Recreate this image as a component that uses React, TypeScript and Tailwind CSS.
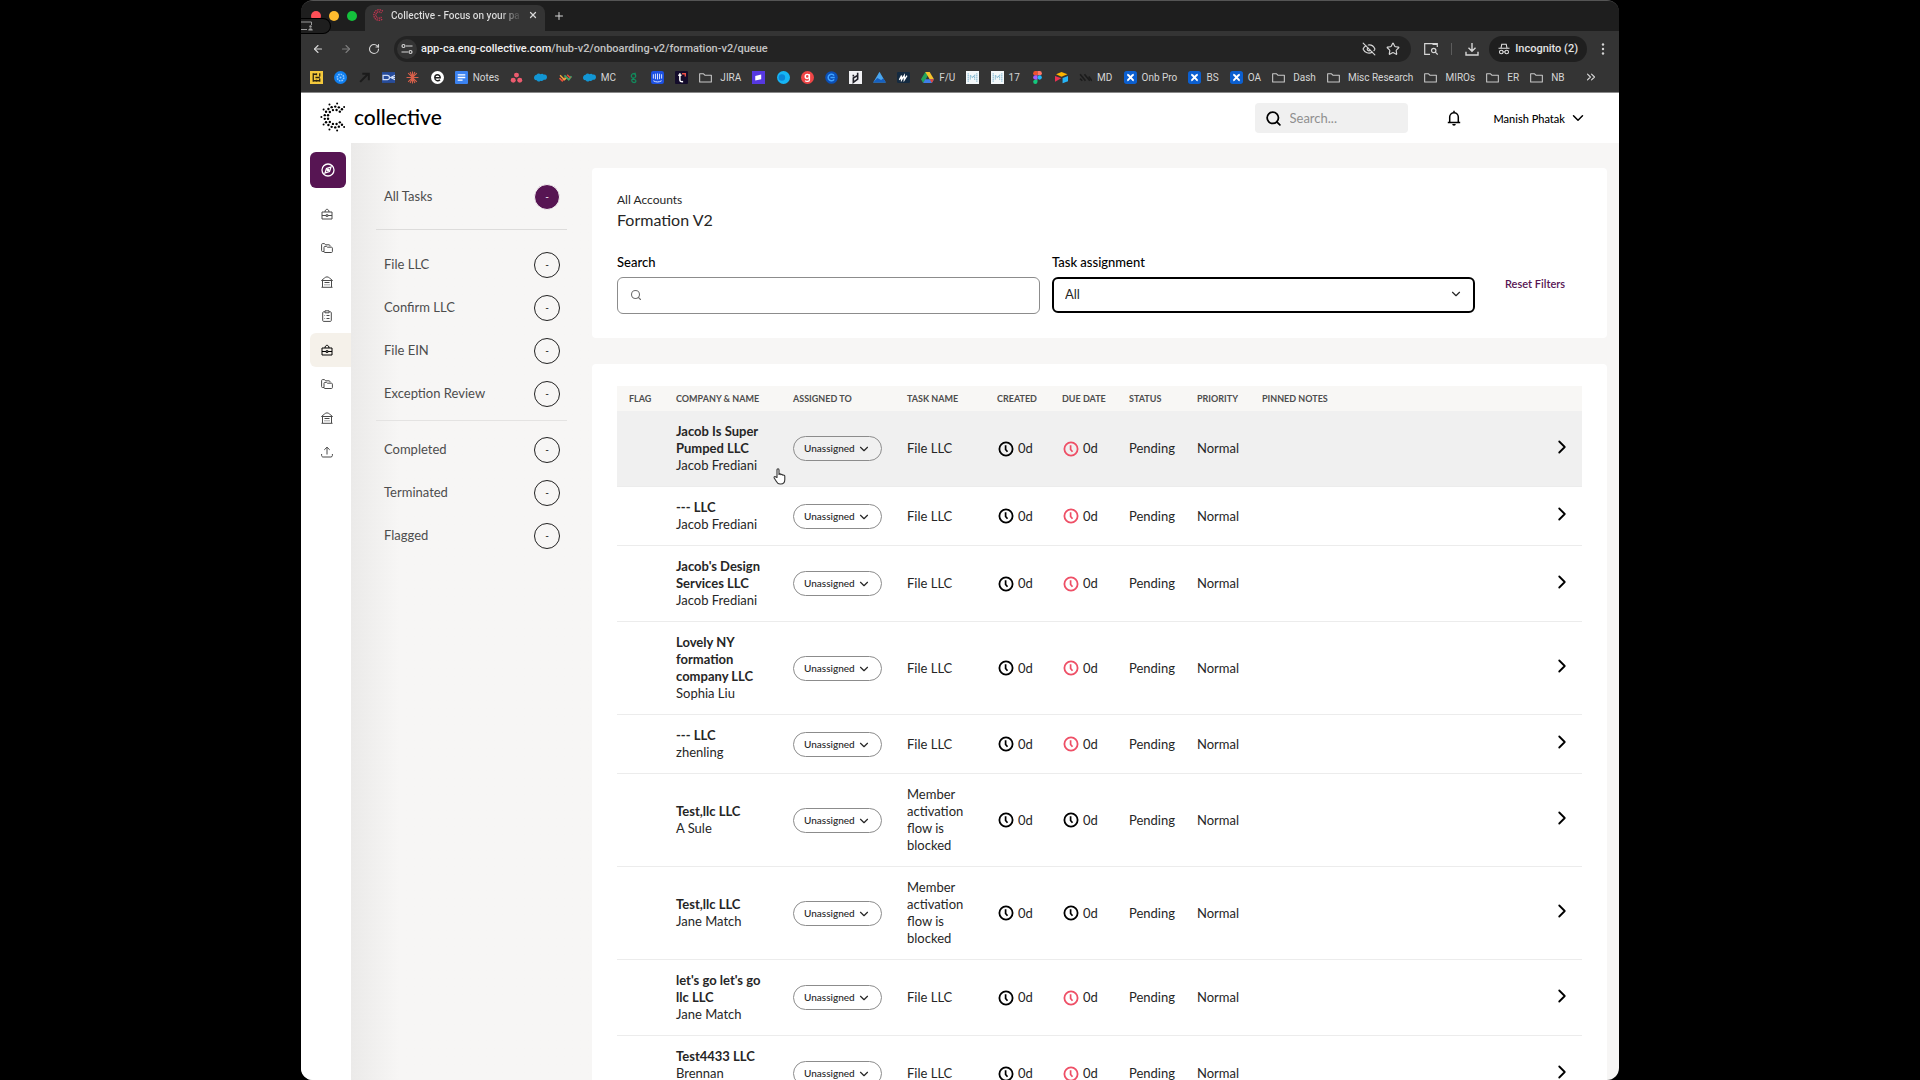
import { useState, type ReactNode } from "react";
import { ArrowLeft, ArrowRight, ChevronDown, ChevronRight, ChevronsRight, EyeOff, Plus, RotateCw, Search, Star, X } from "lucide-react";

interface Bookmark {
  icon: ReactNode;
  label?: string;
}

interface Task {
  company: string;
  member: string;
  extra?: string;
  task: string;
  overdue: boolean;
}

const Box = ({ children }: { children: ReactNode }) => (
  <svg viewBox="0 0 12 12" className="size-[13px] shrink-0" aria-hidden="true">
    {children}
  </svg>
);

const FolderIcon = () => (
  <span className="pr-[3px]">
    <Box>
      <path d="M.6 2.6h3.6l1.2 1.3h6v6.3H.6z" fill="none" stroke="#c7c7c7" strokeWidth="1" strokeLinejoin="round" />
    </Box>
  </span>
);

const SalesforceIcon = () => (
  <Box>
    <path d="M2.4 3.4C3.2 2 5 1.900 6 3c1-.9 2.400-.7 3.100.4C11 3 12 4.300 12 5.800c0 1.700-1.600 2.600-3 2.300C8.200 9.300 6.800 9.400 6 8.900 5 10.200 3.100 9.900 2.600 8.500 1 8.800 0 7.600 0 6.200c0-1.400 1-2.600 2.400-2.800z" fill="#1296d4" />
  </Box>
);

const XIcon = () => (
  <Box>
    <rect width="12" height="12" rx="2.500" fill="#0b5fd0" />
    <path d="M3 3.500c2 0 4.500 5 6 5M9 3.500c-2 0-4.500 5-6 5" stroke="#fff" strokeWidth="1.800" fill="none" />
  </Box>
);

const MatrixIcon = () => (
  <Box>
    <rect width="12" height="12" fill="#f4f8fa" />
    <path d="M2 2v8M10 2v8M4 4l2 2 2-2v4M4 4v4" stroke="#7fb6cf" strokeWidth="1" strokeDasharray="1.300 .5" fill="none" />
  </Box>
);

const bookmarks: Bookmark[] = [
  {
    icon: (
      <Box>
        <rect width="12" height="12" fill="#f4c93c" />
        <path d="M3 2v8M6 2v2M6 8v2M3 3h3M3 9h6M9 2v3M9 7v3M6 6h3M5 6h1" stroke="#2b2410" strokeWidth="1.200" />
      </Box>
    ),
  },
  {
    icon: (
      <Box>
        <circle cx="6" cy="6" r="6" fill="#0f7ff0" />
        <circle cx="6" cy="6" r="3" fill="none" stroke="#8cc6ff" strokeWidth="1.500" strokeDasharray="1.500 .8" />
        <circle cx="6" cy="6" r="1" fill="#8cc6ff" />
      </Box>
    ),
  },
  {
    icon: (
      <Box>
        <path d="M2 10l7-7M4 2.500h6v6" stroke="#1b1b1b" strokeWidth="1.800" fill="none" />
      </Box>
    ),
  },
  {
    icon: (
      <Box>
        <rect y="1" width="12" height="10" fill="#274c9b" />
        <path d="M1 4h4c2.500 0 2.500 4 0 4H1zM7 6h5M8 6l4-2M8 6l4 2" stroke="#cfdcf5" strokeWidth="1.100" fill="none" />
      </Box>
    ),
  },
  {
    icon: (
      <Box>
        <path d="M6 .5v11M.5 6h11M2 2l8 8M10 2l-8 8M3.800 1l4.400 10M8.200 1L3.800 11" stroke="#d9604a" strokeWidth="1" />
      </Box>
    ),
  },
  {
    icon: (
      <Box>
        <circle cx="6" cy="6" r="6" fill="#fff" />
        <path d="M3.500 6.300h5C8.500 2.400 3.500 2.500 3.500 6.200c0 3 3.300 3.400 4.800 1.800" stroke="#1f1f1f" strokeWidth="1.300" fill="none" />
      </Box>
    ),
  },
  {
    icon: (
      <Box>
        <rect width="12" height="12" rx="1" fill="#3b82f0" />
        <path d="M2.500 3.500h7M2.500 6h7M2.500 8.500h4.500" stroke="#fff" strokeWidth="1.200" />
      </Box>
    ),
    label: "Notes",
  },
  {
    icon: (
      <Box>
        <circle cx="6" cy="3.800" r="2.300" fill="#ec5b6e" />
        <circle cx="3" cy="8.600" r="2.300" fill="#ec5b6e" />
        <circle cx="9" cy="8.600" r="2.300" fill="#ec5b6e" />
      </Box>
    ),
  },
  { icon: <SalesforceIcon /> },
  {
    icon: (
      <Box>
        <path d="M.5 6.500l2.500 2.500 3-3" stroke="#e2503b" strokeWidth="1.600" fill="none" />
        <path d="M1 4l4 4 2.500-2.500" stroke="#f0a63a" strokeWidth="1.400" fill="none" />
        <path d="M5 4l4 4 2.500-3" stroke="#3fa66b" strokeWidth="1.600" fill="none" />
        <path d="M7.500 3.500l3 3" stroke="#e2503b" strokeWidth="1.400" />
      </Box>
    ),
  },
  { icon: <SalesforceIcon />, label: "MC" },
  {
    icon: (
      <Box>
        <circle cx="6" cy="4.500" r="2" fill="none" stroke="#128a5c" strokeWidth="1.200" />
        <path d="M8 2l-2 .6M6.500 6.500L4.500 8c-.8 3 4 3.500 3.700 1C8 7.500 6 8 5 7.500" fill="none" stroke="#128a5c" strokeWidth="1.200" />
      </Box>
    ),
  },
  {
    icon: (
      <Box>
        <rect width="12" height="12" rx="2" fill="#1c50e0" />
        <path d="M2.200 3v4M4.100 2.500v5M6 2.300v5.500M7.900 2.500v5M9.800 3v4M2.200 9c2.400 1.500 5.200 1.500 7.600 0" stroke="#dbe6ff" strokeWidth=".9" fill="none" />
      </Box>
    ),
  },
  {
    icon: (
      <Box>
        <rect width="12" height="12" rx="1" fill="#140c2b" />
        <path d="M4.500 2v6c0 1.500 1 2 3 1.800M3 4h3" stroke="#fff" strokeWidth="1.400" fill="none" />
        <path d="M6.500 2.600h3V5" stroke="#ee5147" strokeWidth="1.300" fill="none" />
      </Box>
    ),
  },
  { icon: <FolderIcon />, label: "JIRA" },
  {
    icon: (
      <Box>
        <rect width="12" height="12" fill="#5638e0" />
        <path d="M3 4.500l5.500-1.300v4.300L3 8.800z" fill="#fff" />
      </Box>
    ),
  },
  {
    icon: (
      <Box>
        <circle cx="6" cy="6" r="6" fill="#16b5f5" />
        <circle cx="4.500" cy="6" r="3" fill="#0a86d8" />
      </Box>
    ),
  },
  {
    icon: (
      <Box>
        <circle cx="6" cy="6" r="6" fill="#ee4546" />
        <circle cx="5.800" cy="5" r="1.900" fill="none" stroke="#fff" strokeWidth="1.300" />
        <path d="M7.800 3v5c0 2-3 2-4 .9" fill="none" stroke="#fff" strokeWidth="1.200" />
      </Box>
    ),
  },
  {
    icon: (
      <Box>
        <circle cx="6" cy="6" r="5.800" fill="#0b4fb6" />
        <path d="M8.400 4.300a3 3 0 1 0 0 3.400M5 6h4" fill="none" stroke="#3fa2ff" strokeWidth="1.400" />
      </Box>
    ),
  },
  {
    icon: (
      <Box>
        <rect width="12" height="12" fill="#f1f1f4" />
        <path d="M8 1.500v6L4 10.500v-4L8 4M4 3.500v1.500" fill="none" stroke="#22222a" strokeWidth="1.500" />
      </Box>
    ),
  },
  {
    icon: (
      <Box>
        <path d="M6 .8L11.800 10.500H.2z" fill="#4aa7f0" />
        <path d="M0 10.600l4-4.200 3.500 1.800L9.500 6.600l2.500 4z" fill="#155fc0" />
      </Box>
    ),
  },
  {
    icon: (
      <Box>
        <rect y="1" width="12" height="10" rx="1" fill="#142a40" />
        <path d="M2.200 8.200l2-4v4l2.500-4v4l2.500-4" stroke="#fff" strokeWidth="1.200" fill="none" />
      </Box>
    ),
  },
  {
    icon: (
      <Box>
        <path d="M4 1h4L4.200 8 2 11 0 7.700z" fill="#25a35a" />
        <path d="M4 1h4l4 6.700H8z" fill="#f6c12c" />
        <path d="M4 7.700h8L10 11H2z" fill="#3f7fe8" />
        <path d="M8 7.700h4L10 11z" fill="#e3453a" />
      </Box>
    ),
    label: "F/U",
  },
  { icon: <MatrixIcon /> },
  { icon: <MatrixIcon />, label: "17" },
  {
    icon: (
      <Box>
        <path d="M6 0H4a2 2 0 0 0 0 4h2z" fill="#f0502e" />
        <path d="M6 0h2a2 2 0 0 1 0 4H6z" fill="#ff7667" />
        <path d="M6 4H4a2 2 0 0 0 0 4h2z" fill="#a45bff" />
        <circle cx="8" cy="6" r="2" fill="#22b8fb" />
        <path d="M6 8H4a2 2 0 1 0 2 2z" fill="#14c77d" />
      </Box>
    ),
  },
  {
    icon: (
      <Box>
        <path d="M1 3l5-2 5.500 2-5.500 2.300z" fill="#fcb400" />
        <path d="M12 4.500v5L7 11.300V6.500z" fill="#26b5f8" />
        <path d="M0 4.500l5.800 2.300L0 10z" fill="#ec3152" />
      </Box>
    ),
  },
  {
    icon: (
      <Box>
        <path d="M1 3l5 6M5 3l5 6M9 5l3 4M1 7l2 2" stroke="#1c1c1c" strokeWidth="1.500" />
      </Box>
    ),
    label: "MD",
  },
  { icon: <XIcon />, label: "Onb Pro" },
  { icon: <XIcon />, label: "BS" },
  { icon: <XIcon />, label: "OA" },
  { icon: <FolderIcon />, label: "Dash" },
  { icon: <FolderIcon />, label: "Misc Research" },
  { icon: <FolderIcon />, label: "MIROs" },
  { icon: <FolderIcon />, label: "ER" },
  { icon: <FolderIcon />, label: "NB" },
];

const filterGroups = [
  ["All Tasks"],
  ["File LLC", "Confirm LLC", "File EIN", "Exception Review"],
  ["Completed", "Terminated", "Flagged"],
];

const blocked = "Member activation flow is blocked";

const tasks: Task[] = [
  { company: "Jacob Is Super Pumped LLC", member: "Jacob Frediani", task: "File LLC", overdue: true },
  { company: "--- LLC", member: "Jacob Frediani", task: "File LLC", overdue: true },
  { company: "Jacob's Design Services LLC", member: "Jacob Frediani", task: "File LLC", overdue: true },
  { company: "Lovely NY formation company LLC", member: "Sophia Liu", task: "File LLC", overdue: true },
  { company: "--- LLC", member: "zhenling", task: "File LLC", overdue: true },
  { company: "Test,llc LLC", member: "A Sule", task: blocked, overdue: false },
  { company: "Test,llc LLC", member: "Jane Match", task: blocked, overdue: false },
  { company: "let's go let's go llc LLC", member: "Jane Match", task: "File LLC", overdue: true },
  { company: "Test4433 LLC", member: "Brennan", extra: "\u00a0", task: "File LLC", overdue: true },
];

const RailIcon = ({ name }: { name: string }) => (
  <svg viewBox="0 0 12 12" className="size-3" fill="none" stroke="currentColor" strokeWidth="1" strokeLinejoin="round" aria-hidden="true">
    {name === "briefcase" && <path d="M1 4h10v7H1zM4 4c0-3.600 4-3.600 4 0M1 7.500h4M7 7.500h4M5 6.800h2v1.500H5z" />}
    {name === "folders" && (
      <path d="M3 9.500H1.500a.9.900 0 0 1-.9-.9V2.500c0-.5.400-.9.900-.9h2l1 1.200h3.600c.5 0 .9.400.9.900v.7M3.800 4.400h1.900l.8.800h4c.5 0 .9.400.9.900v3.500c0 .5-.4.900-.9.900H3.800c-.5 0-.8-.4-.8-.9V5.300c0-.5.300-.9.800-.9z" />
    )}
    {name === "bank" && <path d="M.5 4.500L3.500 2c1.500-1.500 3.500-1.500 5 0l3 2.500zM1.500 4.500V11M10.500 4.500V11M.5 11.300h11M3.500 6.500h5M3.500 8.800h1M5.500 8.800h1M7.500 8.800h1" />}
    {name === "clipboard" && <path d="M4 1.800H2.600c-.5 0-.9.400-.9.900v7.800c0 .5.400.9.900.9h6.800c.5 0 .9-.4.900-.9V2.700c0-.5-.4-.9-.9-.9H8M4 .8h4v2H4zM5.500 5.500h3M5.500 8.500h3M3.500 5.500h.6M3.500 8.500h.6" />}
    {name === "upload" && <path d="M6 8.500V1.300M3.300 3.800L6 1.200l2.700 2.600M.6 8v1.500c0 .9.600 1.500 1.500 1.500h7.800c.9 0 1.500-.6 1.500-1.500V8" />}
  </svg>
);

const rail = ["briefcase", "folders", "bank", "clipboard", "briefcase", "folders", "bank", "upload"];

const ClockIcon = ({ red }: { red: boolean }) => (
  <svg viewBox="0 0 16 16" className={`size-4 shrink-0 ${red ? "text-[#ee4f66]" : "text-black"}`} fill="none" stroke="currentColor" aria-hidden="true">
    <circle cx="8" cy="8" r="6.600" strokeWidth="1.800" />
    <path d="M7.600 4.300v4.200l1.900 2.300" strokeWidth="1.700" />
  </svg>
);

// rings of the dotted "C" mark: radius, dot size, number of dots
const rings = [
  [7.2, 1.2, 10],
  [10.4, 1.2, 14],
  [13.6, 1, 9],
];

const CollectiveMark = ({ className }: { className: string }) => (
  <svg viewBox="0 0 30 32" className={className} fill="currentColor" aria-hidden="true">
    {rings.map(([radius, dot, count]) =>
      Array.from({ length: count }, (_, i) => {
        const angle = ((48 + (264 * i) / (count - 1)) * Math.PI) / 180;
        return <circle key={`${radius}-${i}`} cx={18 + radius * Math.cos(angle)} cy={16 + radius * Math.sin(angle)} r={dot} />;
      }),
    )}
  </svg>
);

function BrowserChrome() {
  return (
    <div className="bg-[#343434] font-[Roboto,sans-serif] text-[#d6d6d6]">
      <div className="relative flex h-[30px] items-end bg-[#1e1e1e] pl-[10px]">
        <div className="mb-[10px] flex gap-2">
          <span className="size-[10px] rounded-full bg-[#ff4f57]" />
          <span className="size-[10px] rounded-full bg-[#febb2e]" />
          <span className="size-[10px] rounded-full bg-[#14c13c]" />
        </div>
        <div className="absolute top-[17px] left-0 flex h-4 w-[30px] items-center rounded-r-lg border border-l-0 border-black bg-[#1e1e1e]">
          <svg viewBox="0 0 12 10" className="h-[10px] w-3" fill="none" stroke="#9a9a9a" aria-hidden="true">
            <path d="M0 1h10.500v3M0 8.500h6" />
            <circle cx="9.500" cy="5.500" r="1.200" fill="#9a9a9a" stroke="none" />
            <path d="M7.300 9.500c0-3 4.400-3 4.400 0z" fill="#9a9a9a" stroke="none" />
          </svg>
        </div>
        <div className="ml-2 flex h-[26px] w-[180px] items-center rounded-t-lg bg-[#343434] px-2 pb-[6px]">
          <svg viewBox="0 0 12 12" className="size-3 shrink-0" fill="none" stroke="#c2334f" aria-hidden="true">
            <path d="M9.800 2.200a5.300 5.300 0 1 0 0 7.600" strokeWidth="1.300" strokeDasharray="1.400 .8" />
            <path d="M8.500 4a3.200 3.200 0 1 0 0 4" strokeWidth="1.300" strokeDasharray="1.200 .6" />
          </svg>
          <span className="ml-[6px] w-[132px] bg-linear-to-r from-[#dedede] from-85% to-[#444] bg-clip-text text-[10px] font-medium whitespace-nowrap text-transparent">
            Collective - Focus on your pa
          </span>
          <button aria-label="Close tab" className="ml-2">
            <X className="size-[10px]" strokeWidth={3} />
          </button>
        </div>
        <button aria-label="New tab" className="mb-[9px] ml-2">
          <Plus className="size-3" strokeWidth={2} />
        </button>
      </div>
      <div className="flex h-[33px] items-center px-[10px] pt-[2px]">
        <div className="flex items-center gap-4 pl-px">
          <button aria-label="Back"><ArrowLeft className="size-3" strokeWidth={2.2} /></button>
          <button aria-label="Forward"><ArrowRight className="size-3 text-[#7d7d7d]" strokeWidth={2.2} /></button>
          <button aria-label="Reload"><RotateCw className="size-3" strokeWidth={2.2} /></button>
        </div>
        <div className="ml-[14px] flex h-[26px] flex-1 items-center rounded-full bg-[#232323] px-[3px]">
          <span className="flex size-5 items-center justify-center rounded-full bg-[#343434]">
            <svg viewBox="0 0 12 12" className="size-3" fill="none" stroke="currentColor" strokeWidth="1.200" aria-hidden="true">
              <path d="M5 3h6.500M.5 9H7" />
              <circle cx="2.500" cy="3" r="1.500" />
              <circle cx="9.500" cy="9" r="1.500" />
            </svg>
          </span>
          <span className="ml-1 flex-1 text-[11px] font-medium text-[#c4c4c4]">
            <span className="text-[#f0f0f0]">app-ca.eng-collective.com</span>/hub-v2/onboarding-v2/formation-v2/queue
          </span>
          <button aria-label="Third-party cookies blocked"><EyeOff className="size-[14px]" strokeWidth={2} /></button>
          <button aria-label="Bookmark" className="mr-2 ml-[10px]"><Star className="size-[14px]" strokeWidth={2} /></button>
        </div>
        <div className="ml-[13px] flex items-center">
          <button aria-label="Side panel search">
            <svg viewBox="0 0 14 12" className="h-3 w-[14px]" fill="none" stroke="currentColor" strokeWidth="1.200" aria-hidden="true">
              <path d="M6 11.300H.7V.7h12.600V4M8.500 1.500h4.800" />
              <circle cx="9.700" cy="7.500" r="2.200" />
              <path d="M11.300 9.200l2.400 2.400" />
            </svg>
          </button>
          <span className="mx-[13px] h-3 w-px bg-[#5c5c5c]" />
          <button aria-label="Downloads">
            <svg viewBox="0 0 14 14" className="size-[14px]" fill="none" stroke="currentColor" strokeWidth="1.400" aria-hidden="true">
              <path d="M7 1v8M3.500 5.700L7 9.200l3.500-3.500M1 9.800V13h12V9.800" />
            </svg>
          </button>
          <button className="ml-[10px] flex h-[26px] items-center gap-[5px] rounded-full bg-[#1f1f1f] px-[9px] text-[11px] font-medium whitespace-nowrap text-[#e2e2e2]">
            <svg viewBox="0 0 12 12" className="size-3" fill="none" stroke="currentColor" strokeWidth="1.100" aria-hidden="true">
              <path d="M3 5L3.800 1.200h4.400L9 5M.5 5.300h11M5 9.200c.6-.5 1.400-.5 2 0" />
              <circle cx="3.300" cy="9" r="1.800" />
              <circle cx="8.700" cy="9" r="1.800" />
            </svg>
            Incognito (2)
          </button>
          <button aria-label="Menu" className="ml-[10px]">
            <svg viewBox="0 0 12 12" className="size-3" fill="currentColor" aria-hidden="true">
              <circle cx="6" cy="1.500" r="1.200" />
              <circle cx="6" cy="6" r="1.200" />
              <circle cx="6" cy="10.500" r="1.200" />
            </svg>
          </button>
        </div>
      </div>
      <nav aria-label="Bookmarks" className="flex h-[29px] items-center justify-between border-b border-[#8a8a8a] pr-[21px] pb-[2px] pl-[9px] text-[10px]">
        {bookmarks.map((bookmark, index) => (
          <a key={index} href="#" aria-label={bookmark.label ?? "Bookmark"} className="flex items-center gap-[5px] whitespace-nowrap">
            {bookmark.icon}
            {bookmark.label}
          </a>
        ))}
        <button aria-label="More bookmarks" className="ml-2"><ChevronsRight className="size-[14px]" strokeWidth={2} /></button>
      </nav>
    </div>
  );
}

function AppHeader() {
  return (
    <header className="flex h-[50px] items-center bg-white pr-8 pl-4">
      <a href="#" className="flex items-center gap-[7px] pb-[2px] text-black">
        <CollectiveMark className="h-8 w-[30px]" />
        <span className="text-[21px] leading-6 font-medium">collective</span>
      </a>
      <label className="ml-auto flex h-[30px] w-[153px] items-center gap-2 rounded-sm bg-[#f0f0f0] pl-[10px]">
        <Search className="size-[17px] shrink-0 text-black" strokeWidth={2.5} />
        <input type="text" aria-label="Search" placeholder="Search..." className="w-full min-w-0 bg-transparent text-[13px] outline-none placeholder:text-[#8f8f8f]" />
      </label>
      <button aria-label="Notifications" className="ml-[38px]">
        <svg viewBox="0 0 16 16" className="size-4" fill="none" stroke="#000" strokeWidth="1.500" aria-hidden="true">
          <path d="M1.800 12.500h12.400M3.700 12.500V7a4.300 4.300 0 0 1 8.600 0v5.500M8 .8v2" />
          <path d="M6.200 14h3.600a1.800 1.800 0 0 1-3.600 0z" fill="#000" stroke="none" />
        </svg>
      </button>
      <button className="ml-8 flex items-center gap-1 text-[11px] font-medium text-black">
        Manish Phatak
        <ChevronDown className="size-[18px]" strokeWidth={2} />
      </button>
    </header>
  );
}

function TaskRow({ row, highlighted }: { row: Task; highlighted: boolean }) {
  return (
    <tr className={`border-b border-[#ececec] ${highlighted ? "bg-[#f0f0f0]" : ""}`}>
      <td />
      <td className="px-3 py-3">
        <div className="font-bold">{row.company}</div>
        <div>{row.member}</div>
        {row.extra && <div>{row.extra}</div>}
      </td>
      <td className="px-3">
        <div className="relative h-[25px] w-[89px]">
          <select aria-label={`Assignee for ${row.company}`} className="size-full appearance-none rounded-full border border-[#8c8c8c] pl-[10px] text-[10px] font-medium">
            <option>Unassigned</option>
          </select>
          <ChevronDown className="pointer-events-none absolute top-[6px] right-[11px] size-[14px]" strokeWidth={2} />
        </div>
      </td>
      <td className="px-3 py-3">{row.task}</td>
      <td className="px-3">
        <div className="flex items-center gap-1 pl-px"><ClockIcon red={false} />0d</div>
      </td>
      <td className="px-3">
        <div className="flex items-center gap-1 pl-px"><ClockIcon red={row.overdue} />0d</div>
      </td>
      <td className="px-3">Pending</td>
      <td className="px-3">Normal</td>
      <td />
      <td>
        <button aria-label="Open task" className="flex pb-1 pl-[10px]">
          <ChevronRight className="size-[22px] text-black" strokeWidth={2} />
        </button>
      </td>
    </tr>
  );
}

export default function App() {
  const [active, setActive] = useState("All Tasks");

  return (
    <div className="h-screen overflow-hidden bg-black font-[Lato,sans-serif] text-[13px] leading-[17px] text-[#262626]">
      <div className="mx-auto flex h-full max-w-[1318px] flex-col overflow-hidden rounded-xl border-t border-[#555]">
        <BrowserChrome />
        <AppHeader />

        <div className="flex min-h-0 flex-1 bg-[#f7f6f5]">
          <nav aria-label="Sections" className="flex w-[50px] shrink-0 flex-col bg-white pt-[9px] pl-[9px] text-[#4a4a4a]">
            <a href="#" aria-label="Explore" className="mb-[9px] flex size-9 items-center justify-center rounded-md bg-[#571553] text-white">
              <svg viewBox="0 0 14 14" className="size-[14px]" fill="none" stroke="currentColor" strokeWidth="1.300" aria-hidden="true">
                <circle cx="7" cy="7" r="6" />
                <path d="M10 4L8.500 8.500 4 10l1.500-4.500z" />
                <circle cx="7" cy="7" r=".8" />
              </svg>
            </a>
            {rail.map((name, index) => (
              <a
                key={index}
                href="#"
                aria-label={name}
                className={`flex h-[34px] items-center rounded-l-md pl-[11px] ${index === 4 ? "bg-[#f5f1ea] text-black" : ""}`}
              >
                <RailIcon name={name} />
              </a>
            ))}
          </nav>

          <aside className="w-[241px] shrink-0 bg-linear-to-r from-[#ebeae9] to-[#f7f6f5] to-20% pt-[32px] pr-[25px] pl-[25px]">
            {filterGroups.map((group, groupIndex) => (
              <div key={groupIndex} className={`${groupIndex === 0 ? "pb-[11px]" : groupIndex === 1 ? "border-t border-[#dddcdb] pt-[13px] pb-[5px]" : "border-t border-[#e4e3e2] pt-[7px]"}`}>
                {group.map((label) => (
                  <button
                    key={label}
                    onClick={() => setActive(label)}
                    className="flex h-[43px] w-full items-center justify-between pr-[7px] pl-2 text-[#4d4d4d]"
                  >
                    {label}
                    <span className={`flex size-[26px] items-center justify-center rounded-full border text-[10px] ${active === label ? "border-[#f7f6f5] bg-[#571553] text-white" : "border-[#222] text-black"}`}>
                      -
                    </span>
                  </button>
                ))}
              </div>
            ))}
          </aside>

          <main className="flex min-w-0 flex-1 flex-col gap-[26px] pt-[25px] pr-3">
            <section className="rounded-sm bg-white px-[25px] pt-6 pb-6">
              <p className="text-[12px] leading-4">All Accounts</p>
              <h1 className="mt-[2px] text-[16px] leading-5">Formation V2</h1>
              <div className="mt-6 flex items-start">
                <div className="flex-1">
                  <label htmlFor="search" className="block font-medium text-black">Search</label>
                  <div className="relative mt-[6px]">
                    <input id="search" type="text" className="h-[37px] w-full rounded-md border border-[#8c8c8c] bg-white pl-9 outline-none" />
                    <Search className="pointer-events-none absolute top-3 left-[13px] size-3 text-[#6e6e6e]" strokeWidth={2.2} />
                  </div>
                </div>
                <div className="ml-3 flex-1">
                  <label htmlFor="assignment" className="block font-medium text-black">Task assignment</label>
                  <div className="relative mt-[6px]">
                    <select id="assignment" className="h-9 w-full appearance-none rounded-md border-2 border-black bg-white pb-[2px] pl-[11px] outline-none">
                      <option>All</option>
                    </select>
                    <ChevronDown className="pointer-events-none absolute top-[10px] right-3 size-[14px]" strokeWidth={2} />
                  </div>
                </div>
                <button className="mt-[21px] w-[107px] pl-[30px] text-left text-[11px] font-semibold whitespace-nowrap text-[#571553]">Reset Filters</button>
              </div>
            </section>

            <section className="min-h-0 flex-1 overflow-hidden rounded-t-sm bg-white px-[25px] pt-[22px]">
              <table className="w-full table-fixed border-collapse text-left">
                <colgroup>
                  <col className="w-[47px]" />
                  <col className="w-[117px]" />
                  <col className="w-[114px]" />
                  <col className="w-[90px]" />
                  <col className="w-[65px]" />
                  <col className="w-[67px]" />
                  <col className="w-[68px]" />
                  <col className="w-[65px]" />
                  <col />
                  <col className="w-[41px]" />
                </colgroup>
                <thead>
                  <tr className="h-[25px] bg-[#f8f7f5] text-[9px] whitespace-nowrap text-[#4d4d4d]">
                    {["FLAG", "COMPANY & NAME", "ASSIGNED TO", "TASK NAME", "CREATED", "DUE DATE", "STATUS", "PRIORITY", "PINNED NOTES"].map((title) => (
                      <th key={title} className="px-3 font-bold">{title}</th>
                    ))}
                    <th />
                  </tr>
                </thead>
                <tbody>
                  {tasks.map((row, index) => (
                    <TaskRow key={index} row={row} highlighted={index === 0} />
                  ))}
                </tbody>
              </table>
            </section>
          </main>
        </div>
      </div>

      {/* pointer */}
      <svg viewBox="0 0 14 18" className="pointer-events-none absolute top-[468px] left-[773px] h-[18px] w-[14px]" fill="#fff" stroke="#333" strokeWidth="1.100" strokeLinejoin="round" aria-hidden="true">
        <path d="M4 9.500V2c0-1.600 2-1.600 2 0v4.500c.3-1 1.900-.8 2 .3.500-.7 1.700-.4 1.900.5.700-.5 1.900-.2 1.900.9v3.300c0 2.500-1.500 4.500-4 4.500H7c-2 0-2.800-1-3.600-2.500L1.200 10c-.6-1.200.8-2 1.600-1z" />
      </svg>
    </div>
  );
}
